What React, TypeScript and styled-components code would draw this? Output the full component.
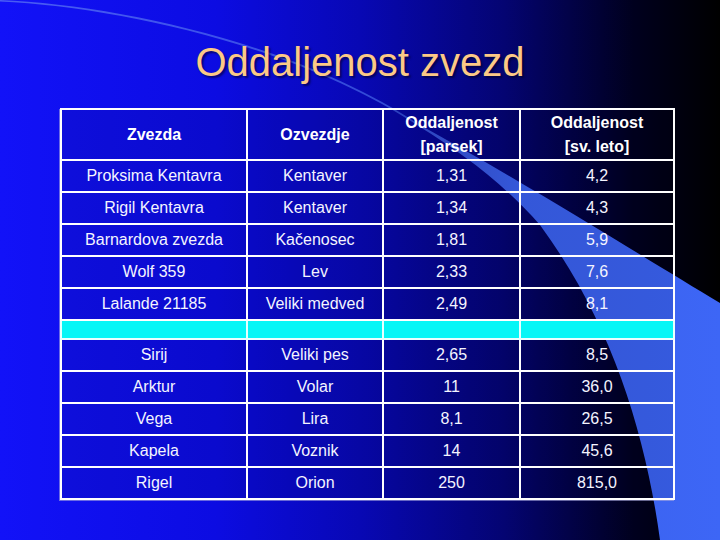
import React from 'react'
import styled, { createGlobalStyle } from 'styled-components'

const GlobalStyle = createGlobalStyle`
	html, body {
		margin: 0;
		padding: 0;
		background: #000;
	}
	body {
		font-family: "Liberation Sans", Arial, sans-serif;
	}
`

const Slide = styled.div`
	position: relative;
	width: 720px;
	height: 540px;
	overflow: hidden;
	background: linear-gradient(90deg, #1212f8 0%, #0c0ce2 30%, #0808b4 50%, #040472 70%, #00001e 88%, #000 100%);
`

const Swoosh = styled.svg`
	position: absolute;
	left: 0;
	top: 0;
	width: 720px;
	height: 540px;
	z-index: 0;
`

const Content = styled.div`
	position: relative;
	z-index: 1;
	display: flex;
	flex-direction: column;
	align-items: flex-start;
	padding: 38px 0 0 60px;
`

const Title = styled.h1`
	margin: 0 0 22px 0;
	width: 600px;
	text-align: center;
	font-size: 40px;
	line-height: 48px;
	font-weight: normal;
	color: #fcc986;
	text-shadow: 2px 2px 2px rgba(0, 0, 30, 0.55);
`

const Table = styled.table`
	border-collapse: collapse;
	table-layout: fixed;
	width: 613px;
	border: 2px solid #fff;
	box-shadow: -1px 1px 0 rgba(170, 170, 220, 0.6);
	color: #fff;
	font-size: 16px;
`

const Col = styled.col<{ $w: number }>`
	width: ${p => p.$w}px;
`

const HeadCell = styled.th`
	height: 49px;
	padding: 0;
	border: 2px solid #fff;
	font-weight: bold;
	line-height: 24px;
	text-align: center;
	vertical-align: middle;
	background: rgba(0, 0, 30, 0.1);
`

const Row = styled.tr<{ $spacer?: boolean }>`
	height: ${p => (p.$spacer ? 19 : 32)}px;
	background: ${p => (p.$spacer ? '#06f6f6' : 'rgba(0, 0, 30, 0.1)')};
`

const Cell = styled.td`
	padding: 0;
	border: 2px solid #fff;
	text-align: center;
	vertical-align: middle;
	line-height: 20px;
	white-space: nowrap;
	color: #f4f4ff;
`

const SpacerCell = styled.td`
	padding: 0;
	border: 2px solid #e8ffff;
`

const nearStars = [
	['Proksima Kentavra', 'Kentaver', '1,31', '4,2'],
	['Rigil Kentavra', 'Kentaver', '1,34', '4,3'],
	['Barnardova zvezda', 'Kačenosec', '1,81', '5,9'],
	['Wolf 359', 'Lev', '2,33', '7,6'],
	['Lalande 21185', 'Veliki medved', '2,49', '8,1'],
]

const brightStars = [
	['Sirij', 'Veliki pes', '2,65', '8,5'],
	['Arktur', 'Volar', '11', '36,0'],
	['Vega', 'Lira', '8,1', '26,5'],
	['Kapela', 'Voznik', '14', '45,6'],
	['Rigel', 'Orion', '250', '815,0'],
]

const StarRow: React.FC<{ cells: string[] }> = ({ cells }) => (
	<Row>
		{cells.map((c, i) => <Cell key={i}>{c}</Cell>)}
	</Row>
)

export default function App() {
	return (
		<Slide>
			<GlobalStyle />
			<Swoosh viewBox="0 0 720 540">
				<defs>
					<linearGradient id="sw" gradientUnits="userSpaceOnUse" x1="0" y1="0" x2="720" y2="0">
						<stop offset="0" stopColor="#6f8ff2" stopOpacity="0.6" />
						<stop offset="0.55" stopColor="#4d74f0" stopOpacity="0.6" />
						<stop offset="0.72" stopColor="#3d66f6" stopOpacity="0.95" />
						<stop offset="1" stopColor="#3d66f6" stopOpacity="1" />
					</linearGradient>
				</defs>
				<path
					fill="url(#sw)"
					d="M0,0 C120,5 300,45 420,125 C520,180 640,255 720,303 L720,540 L660,540 C645,430 610,320 540,225 C500,180 460,152 420,127 C300,47 120,7 0,1.5 Z"
				/>
			</Swoosh>
			<Content>
				<Title>Oddaljenost zvezd</Title>
				<Table>
					<colgroup>
						<Col $w={186} />
						<Col $w={136} />
						<Col $w={137} />
						<Col $w={154} />
					</colgroup>
					<thead>
						<tr>
							<HeadCell>Zvezda</HeadCell>
							<HeadCell>Ozvezdje</HeadCell>
							<HeadCell>Oddaljenost<br />[parsek]</HeadCell>
							<HeadCell>Oddaljenost<br />[sv. leto]</HeadCell>
						</tr>
					</thead>
					<tbody>
						{nearStars.map(r => <StarRow key={r[0]} cells={r} />)}
						<Row $spacer>
							<SpacerCell />
							<SpacerCell />
							<SpacerCell />
							<SpacerCell />
						</Row>
						{brightStars.map(r => <StarRow key={r[0]} cells={r} />)}
					</tbody>
				</Table>
			</Content>
		</Slide>
	)
}
